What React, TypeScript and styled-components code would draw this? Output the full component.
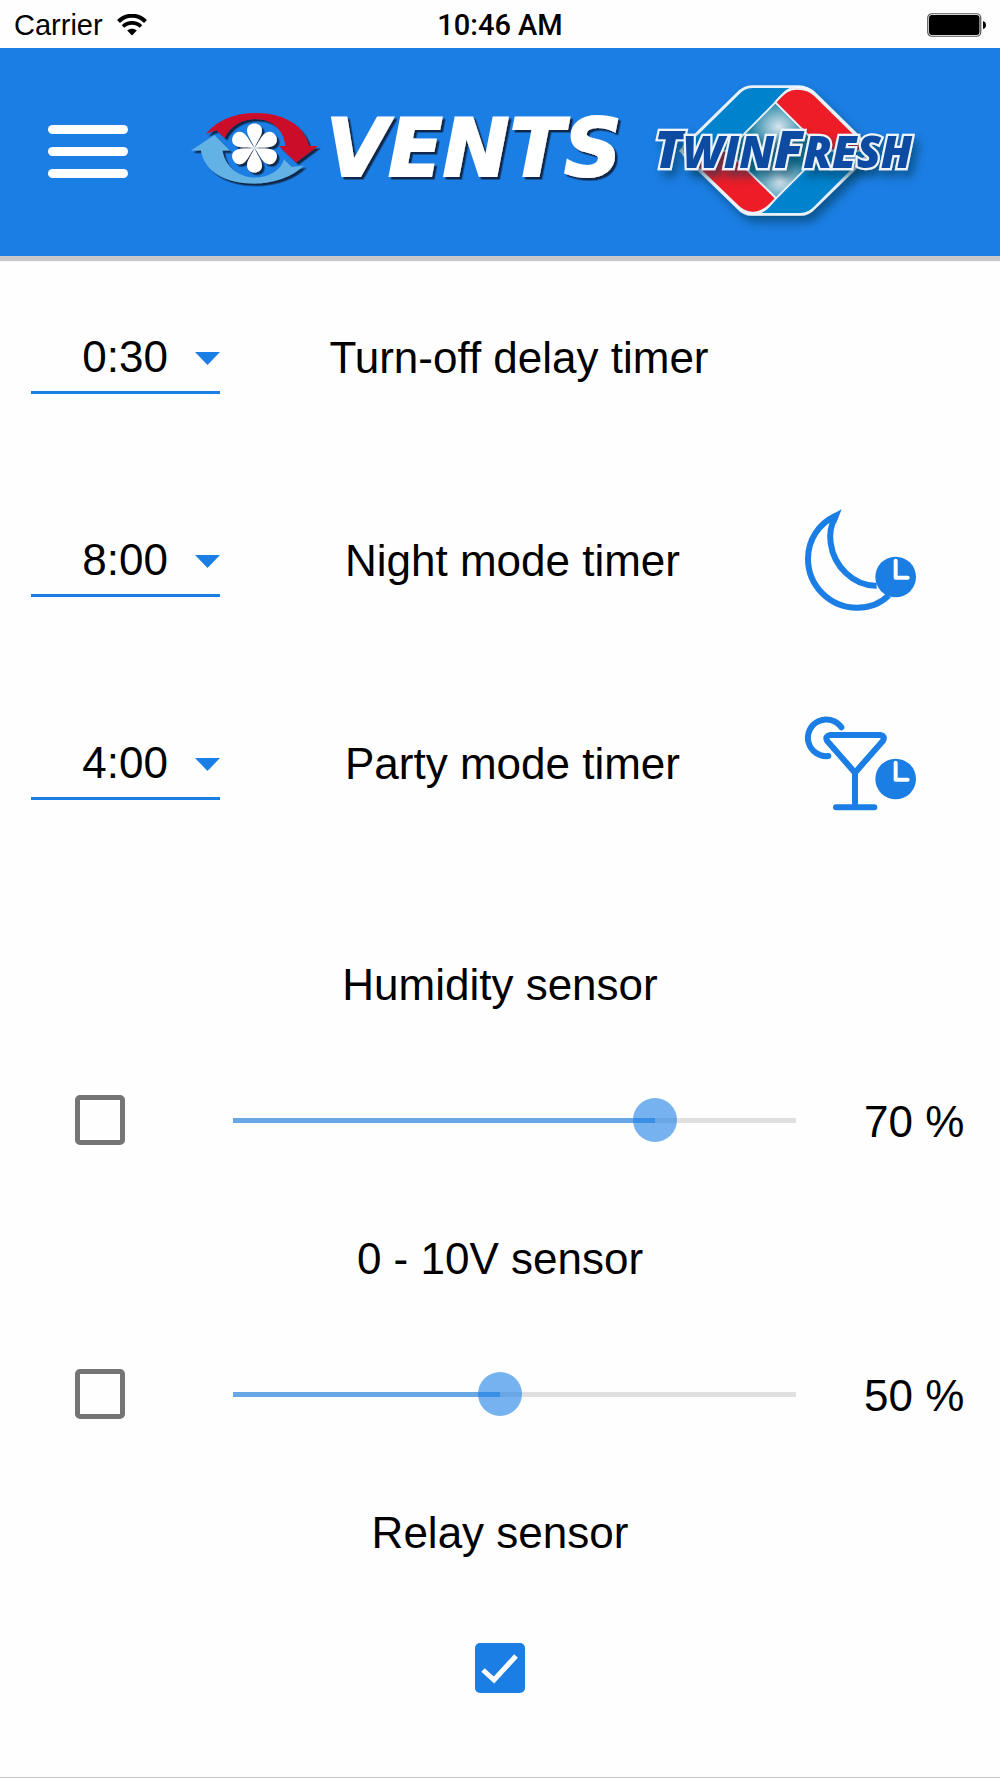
import React, { useState } from 'react';
import styled, { createGlobalStyle } from 'styled-components';

const blue = '#1b7ee4';
const sans = '"Liberation Sans", Arial, Helvetica, sans-serif';

const GlobalStyle = createGlobalStyle`
  *, *::before, *::after { box-sizing: border-box; }
  body { margin: 0; background: #fefefe; color: #000; font-family: ${sans}; }
`;

const Page = styled.div`
  display: flex;
  flex-direction: column;
  min-height: 100vh;
  border-bottom: 1px solid #c4c4c6;
`;

const StatusBar = styled.div`
  display: grid;
  grid-template-columns: 1fr auto 1fr;
  align-items: center;
  height: 48px;
  padding: 2px 14px 0;
  font-size: 29px;
  line-height: 32px;
`;

const Carrier = styled.div`
  display: flex;
  align-items: center;
  gap: 14px;
`;

const Clock = styled.time`
  font-family: Roboto, ${sans};
  font-weight: 500;
`;

const Battery = styled.svg`
  justify-self: end;
`;

const Header = styled.header`
  display: flex;
  align-items: center;
  height: 208px;
  padding-left: 48px;
  background: ${blue};
  box-shadow: 0 5px 1px #c8c8ca;
`;

const MenuButton = styled.button`
  display: flex;
  flex-direction: column;
  gap: 13px;
  width: 80px;
  margin-right: 60px;
  padding: 0 0 2px;
  border: 0;
  background: none;
  cursor: pointer;
`;

const MenuBar = styled.span`
  height: 9px;
  border-radius: 5px;
  background: #fff;
`;

const Brand = styled.svg`
  flex: none;
  overflow: visible;
`;

const TimerRow = styled.div<{ $hasIcon: boolean }>`
  display: grid;
  grid-template-columns: 189px 1fr ${(p) => (p.$hasIcon ? 195 : 182)}px;
  align-items: center;
  height: 203px;
  padding-left: 31px;
`;

const SelectBox = styled.div`
  position: relative;
`;

const Select = styled.select`
  display: block;
  appearance: none;
  width: 100%;
  height: 72px;
  padding: 0 52px 0 0;
  border: 0;
  border-bottom: 3px solid ${blue};
  border-radius: 0;
  background: none;
  color: #000;
  font: 44px ${sans};
  text-align: right;
  text-align-last: right;
`;

const Arrow = styled.svg`
  position: absolute;
  right: 0;
  top: 30px;
  pointer-events: none;
`;

const Label = styled.label`
  font-size: 44px;
  line-height: 52px;
  text-align: center;
`;

const Sensors = styled.section`
  display: flex;
  flex-direction: column;
  gap: 86px;
  padding: 94px 0 80px;
`;

const Sensor = styled.div`
  display: flex;
  flex-direction: column;
  gap: 82px;
`;

const SensorRow = styled.div`
  display: grid;
  grid-template-columns: 50px 1fr 100px;
  align-content: center;
  align-items: center;
  column-gap: 46px;
  height: 54px;
  padding: 0 36px 0 75px;
`;

const RelayRow = styled.div`
  display: flex;
  align-items: center;
  justify-content: center;
  height: 54px;
`;

const tick =
  "url(\"data:image/svg+xml,%3Csvg xmlns='http://www.w3.org/2000/svg' viewBox='0 0 50 50'%3E%3Cpath d='M8 27 19 37 41 13' fill='none' stroke='white' stroke-width='5'/%3E%3C/svg%3E\")";

const Checkbox = styled.input`
  appearance: none;
  width: 50px;
  height: 50px;
  margin: 0;
  border: 5px solid #757575;
  border-radius: 5px;
  cursor: pointer;

  &:checked {
    border: 0;
    background: ${blue} ${tick} center / 50px 50px no-repeat;
  }
`;

const Range = styled.input`
  appearance: none;
  min-width: 0;
  height: 44px;
  margin: 0 0 0 40px;
  background: linear-gradient(to right, #67a7e6 var(--fill), #e0e0e0 var(--fill)) center / calc(100% - 44px) 5px no-repeat;
  cursor: pointer;

  &::-webkit-slider-runnable-track {
    height: 44px;
    background: none;
  }

  &::-webkit-slider-thumb {
    appearance: none;
    width: 44px;
    height: 44px;
    border: 0;
    border-radius: 50%;
    background: rgba(27, 126, 228, 0.6);
  }
`;

const Value = styled.output`
  padding-top: 4px;
  font-size: 44px;
  line-height: 52px;
  white-space: nowrap;
`;

const Wifi = () => (
  <svg width="30" height="22" viewBox="0 0 30 22" aria-hidden="true">
    <g fill="none" stroke="#000" strokeWidth="4">
      <path d="M1.500 7.500C9-.2 21-.2 28.500 7.500" />
      <path d="M6 12.500C11 7.600 19 7.600 24 12.500" strokeWidth="3.600" />
    </g>
    <path d="M10.200 16.600C13 14 17 14 19.800 16.600L15 21.500Z" />
  </svg>
);

const petal = 'M0 0C-2-6-7.500-12-7.500-17.500C-7.500-22-4-24.500 0-24.500S7.500-22 7.500-17.500C7.500-12 2-6 0 0Z';

const VentsLogo = () => (
  <Brand width="444" height="88" viewBox="188 108 444 88" role="img" aria-label="Vents">
    <defs>
      <filter id="drop" x="-10%" y="-10%" width="120%" height="130%">
        <feDropShadow dx="2.500" dy="2.500" stdDeviation="0.600" floodColor="#0a1f3a" floodOpacity="0.900" />
      </filter>
    </defs>
    <g filter="url(#drop)">
      <path
        fill="#cc1029"
        d="M206 134C217 120 235 113 256 113C284 113 304 125 309 146H318L296 162.500L279 146H285.500C284 130 272 119 256 119C242 119 230 126 224.500 138L216.500 130Z"
      />
      <path
        fill="#62b2e6"
        d="M191 150.500L214.500 135L230 150.500H222.500C225 167 239 177.500 255 177.500C269 177.500 281 170 284 159.500L292 167L304 165.500C292 177 274 183.500 254 183.500C225 183.500 204 171 201 150.500Z"
      />
      <g fill="#fff" transform="translate(254.500 148)">
        {[0, 60, 120, 180, 240, 300].map((a) => (
          <path key={a} d={petal} transform={`rotate(${a})`} />
        ))}
      </g>
      <text
        x="326"
        y="176"
        fill="#fff"
        stroke="#fff"
        strokeWidth="2"
        fontFamily="'DejaVu Sans', sans-serif"
        fontWeight="700"
        fontStyle="italic"
        fontSize="80"
      >
        VENTS
      </text>
    </g>
  </Brand>
);

const TwinFreshLogo = () => (
  <Brand width="300" height="176" viewBox="0 -18 900 528" role="img" aria-label="TwinFresh">
    <defs>
      <filter id="soft" x="-15%" y="-15%" width="135%" height="140%">
        <feDropShadow dx="14" dy="20" stdDeviation="14" floodColor="#003a5c" floodOpacity="0.600" />
      </filter>
      <radialGradient id="glow" cx="0.500" cy="0.500" r="0.500">
        <stop offset="0" stopColor="#d8e6ef" />
        <stop offset="1" stopColor="#d8e6ef" stopOpacity="0" />
      </radialGradient>
      <clipPath id="diamond">
        <path d="M430 97L575 242L432 385L287 242Z" />
      </clipPath>
    </defs>
    <g filter="url(#soft)">
      <path
        fill="#fff"
        stroke="#e8f1f8"
        strokeWidth="5"
        d="M360 48H500Q528 48 550 70L705 222Q724 242 705 262L550 413Q530 435 505 435H360Q335 435 315 413L160 262Q141 242 160 222L315 70Q335 48 360 48Z"
      />
      <path fill="#1f83a3" d="M430 97L575 242L432 385L287 242Z" />
      <g clipPath="url(#diamond)">
        <ellipse cx="440" cy="170" rx="85" ry="75" fill="url(#glow)" />
        <ellipse cx="445" cy="335" rx="85" ry="75" fill="url(#glow)" />
      </g>
      <g stroke="#e8f1f8" strokeWidth="6" strokeLinejoin="round">
        <path fill="#0082cd" d="M360 51H490C465 55 455 70 430 97L287 242H145L317 73Q336 51 360 51Z" />
        <path fill="#ee1c25" d="M430 97C460 62 475 56 496 56C520 56 535 62 548 75L718 242H575Z" />
        <path fill="#ee1c25" d="M145 242L317 408C330 421 345 428 362 428C390 428 408 412 432 385L287 242Z" />
        <path fill="#0082cd" d="M372 432C400 425 410 410 432 385L575 242H718L550 410Q530 432 505 432Z" />
      </g>
    </g>
    <text
      x="66"
      y="293"
      fill="#0a4ba3"
      stroke="#eef4fa"
      strokeWidth="13"
      strokeLinejoin="miter"
      paintOrder="stroke"
      filter="url(#soft)"
      fontFamily="'Open Sans', sans-serif"
      fontWeight="800"
      fontStyle="italic"
      fontSize="132"
    >
      <tspan fontSize="155">T</tspan>WIN<tspan fontSize="155">F</tspan>RESH
    </text>
  </Brand>
);

const ClockBadge = ({ cy }: { cy: number }) => (
  <g>
    <circle cx="272" cy={cy} r="61" fill={blue} />
    <path d={`M272 ${cy - 49}V${cy + 2}H308`} fill="none" stroke="#fff" strokeWidth="12" strokeLinecap="round" strokeLinejoin="round" />
  </g>
);

const MoonIcon = () => (
  <svg width="111" height="104" viewBox="0 0 333 312" aria-hidden="true">
    <path
      d="M92 20C41 44 9 92 9 149C9 230 75 296 156 296C191 296 227 283 251 259M92 20C76 50 73 76 77 102C86 171 145 232 215 230"
      fill="none"
      stroke={blue}
      strokeWidth="18"
      strokeMiterlimit="8"
    />
    <path d="M82 16L110 1L92 46Z" fill={blue} />
    <ClockBadge cy={204} />
  </svg>
);

const GlassIcon = () => (
  <svg width="111" height="96" viewBox="0 0 333 288" aria-hidden="true">
    <g fill="none" stroke={blue} strokeWidth="18" strokeLinecap="round" strokeLinejoin="round">
      <path d="M109 34A55 55 0 1 0 70 120" />
      <path d="M76 57H225Q242 60 234 74L150 170L66 74Q59 60 76 57ZM150 170V273M93 274H208" />
    </g>
    <ClockBadge cy={189} />
  </svg>
);

const times = ['0:30', '1:00', '2:00', '4:00', '8:00', '12:00'];

type TimerProps = { id: string; label: string; initial: string; icon?: React.ReactNode };

const Timer = ({ id, label, initial, icon }: TimerProps) => (
  <TimerRow $hasIcon={Boolean(icon)}>
    <SelectBox>
      <Select id={id} defaultValue={initial}>
        {times.map((t) => (
          <option key={t}>{t}</option>
        ))}
      </Select>
      <Arrow width="25" height="13" viewBox="0 0 25 13" aria-hidden="true">
        <path d="M0 0H25L12.500 13Z" fill={blue} />
      </Arrow>
    </SelectBox>
    <Label htmlFor={id}>{label}</Label>
    {icon}
  </TimerRow>
);

type LevelProps = { id: string; label: string; min: number; max: number; initial: number };

const LevelSensor = ({ id, label, min, max, initial }: LevelProps) => {
  const [level, setLevel] = useState(initial);
  const fill = { '--fill': `${((level - min) / (max - min)) * 100}%` } as React.CSSProperties;
  return (
    <Sensor>
      <Label htmlFor={id}>{label}</Label>
      <SensorRow>
        <Checkbox id={id} type="checkbox" />
        <Range
          id={`${id}-level`}
          type="range"
          aria-label={`${label} level`}
          min={min}
          max={max}
          value={level}
          style={fill}
          onChange={(e) => setLevel(Number(e.target.value))}
        />
        <Value htmlFor={`${id}-level`}>{level} %</Value>
      </SensorRow>
    </Sensor>
  );
};

export default function App() {
  return (
    <Page>
      <GlobalStyle />
      <StatusBar>
        <Carrier>
          Carrier
          <Wifi />
        </Carrier>
        <Clock>10:46 AM</Clock>
        <Battery width="59" height="24" viewBox="0 0 59 24" aria-hidden="true">
          <rect x="0.750" y="0.750" width="53" height="22.500" rx="4" fill="#fff" stroke="#555" strokeWidth="1.200" />
          <rect x="2" y="2" width="50.500" height="20" rx="3" />
          <path d="M56 8Q59 9 59 12T56 16Z" />
        </Battery>
      </StatusBar>
      <Header>
        <MenuButton type="button" aria-label="Menu">
          <MenuBar />
          <MenuBar />
          <MenuBar />
        </MenuButton>
        <VentsLogo />
        <TwinFreshLogo />
      </Header>
      <main>
        <Timer id="delay" label="Turn-off delay timer" initial="0:30" />
        <Timer id="night" label="Night mode timer" initial="8:00" icon={<MoonIcon />} />
        <Timer id="party" label="Party mode timer" initial="4:00" icon={<GlassIcon />} />
        <Sensors>
          <LevelSensor id="humidity" label="Humidity sensor" min={40} max={80} initial={70} />
          <LevelSensor id="voltage" label="0 - 10V sensor" min={5} max={100} initial={50} />
          <Sensor>
            <Label htmlFor="relay">Relay sensor</Label>
            <RelayRow>
              <Checkbox id="relay" type="checkbox" defaultChecked />
            </RelayRow>
          </Sensor>
        </Sensors>
      </main>
    </Page>
  );
}
